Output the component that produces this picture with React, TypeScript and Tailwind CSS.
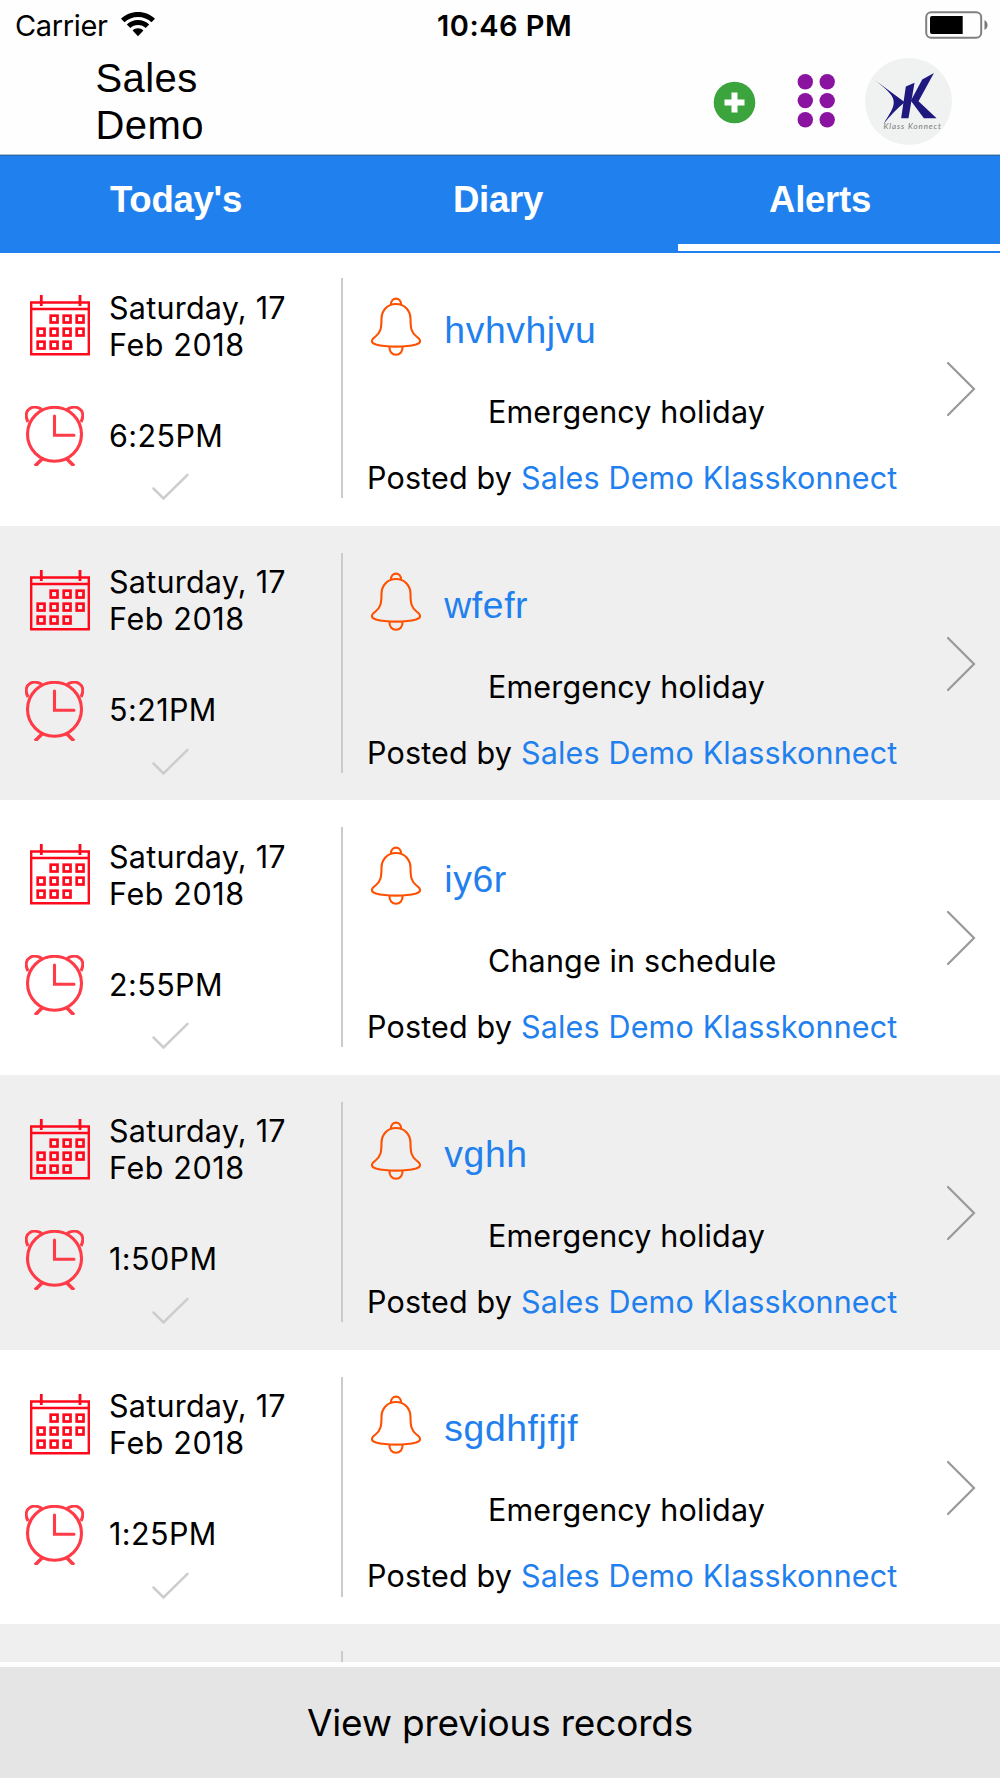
const alerts = [
  { title: "hvhvhjvu", time: "6:25PM", category: "Emergency holiday" },
  { title: "wfefr", time: "5:21PM", category: "Emergency holiday" },
  { title: "iy6r", time: "2:55PM", category: "Change in schedule" },
  { title: "vghh", time: "1:50PM", category: "Emergency holiday" },
  { title: "sgdhfjfjf", time: "1:25PM", category: "Emergency holiday" },
];

const calendarCells = [
  [1, 0], [2, 0], [3, 0],
  [0, 1], [1, 1], [2, 1], [3, 1],
  [0, 2], [1, 2], [2, 2],
];

const CalendarIcon = () => (
  <svg className="mt-[6.5px] h-[61px] w-[60px] shrink-0" viewBox="0 0 60 61" fill="none" stroke="#ff0a1c" strokeWidth="2.4" aria-hidden="true">
    <path d="M1.2 7.5H58.8V59.3H1.2ZM1 14H59" />
    <path d="M11.3 0V11M50 0V11" strokeWidth="2.8" />
    {calendarCells.map(([col, row]) => (
      <rect key={`${col}-${row}`} x={7.7 + col * 13} y={20.7 + row * 13} width="6.8" height="6.8" strokeWidth="2.7" />
    ))}
  </svg>
);

const ClockIcon = () => (
  <svg className="h-[60px] w-[59px] shrink-0" viewBox="0 0 59 60" fill="none" stroke="#ff3b47" strokeWidth="3.1" aria-hidden="true">
    <circle cx="29.5" cy="28.3" r="27" />
    <path d="M29.5 10V29.3H49" strokeLinecap="round" />
    <path d="M3 16C0 10 1 5 5 2.5C8 0.5 13 1 17 3.5M56 16C59 10 58 5 54 2.5C51 0.5 46 1 42 3.5" />
    <path d="M18 52L10 60M41 52L49 60" strokeWidth="3.6" />
  </svg>
);

const BellIcon = () => (
  <svg className="h-[60px] w-[52px] shrink-0" viewBox="0 0 52 60" fill="none" stroke="#ff5000" strokeWidth="2.1" aria-hidden="true">
    <path d="M21 7.5C20.5 -0.3 31.5 -0.3 31 7.5" />
    <path d="M26 7C35 7 40.5 14 40.5 22C40.5 31 41.5 36 46.5 39.5C52 43.5 50.5 46 46 47.5C36 50.3 16 50.3 6 47.5C1.5 46 0 43.5 5.5 39.5C10.5 36 11.5 31 11.5 22C11.5 14 17 7 26 7Z" />
    <path d="M19.5 49.5C18.5 60.5 33.5 60.5 32.5 49.5" />
  </svg>
);

const StatusBar = () => (
  <div className="flex h-[52px] items-start">
    <div className="flex w-[437px] pl-[15px]">
      <span className="mt-[7.5px] w-[93px] text-[29px] leading-[36px] tracking-[-0.35px]">Carrier</span>
      <svg className="mt-[12px] ml-[13px] h-[25px] w-[34px]" viewBox="0 0 34 25" aria-hidden="true">
        <path d="M17 0C10.4 0 4.4 2.6 0 6.8L3.5 10.3C7 6.9 11.8 4.9 17 4.9S27 6.9 30.5 10.3L34 6.8C29.6 2.6 23.6 0 17 0Z" />
        <path d="M17 8.1C12.7 8.1 8.7 9.8 5.8 12.6L9.3 16.1C11.3 14.2 14 13 17 13S22.7 14.2 24.7 16.1L28.2 12.6C25.3 9.8 21.3 8.1 17 8.1Z" />
        <path d="M17 16.3C15 16.3 13 17.1 11.6 18.5L17 24.3L22.4 18.5C21 17.1 19 16.3 17 16.3Z" />
      </svg>
    </div>
    <span className="mt-[7.5px] text-[29px] font-semibold leading-[36px] tracking-[0.5px] whitespace-nowrap">10:46 PM</span>
    <svg className="mt-[10.5px] mr-[11px] ml-auto h-[28px] w-[64px]" viewBox="0 0 64 28" aria-hidden="true">
      <rect x="1.2" y="1.2" width="55" height="25.6" rx="5" fill="none" stroke="#808080" strokeWidth="2" />
      <path d="M7 5H37.7V23H7Q5 23 5 21V7Q5 5 7 5Z" />
      <path d="M59.5 9C63.5 11 63.5 17 59.5 19Z" fill="#777" />
    </svg>
  </div>
);

const Header = () => (
  <div className="flex h-[103px] border-b border-[#aebfd2]">
    <h1 className="mt-[3px] ml-[95.5px] w-[150px] font-['Liberation_Sans',sans-serif] text-[40px] leading-[46.6px] tracking-[0.4px]">
      Sales Demo
    </h1>
    <div className="mt-[6px] mr-[48px] ml-auto flex h-[87px] items-center">
      <svg className="h-[44px] w-[44px]" viewBox="0 0 44 44" aria-hidden="true">
        <circle cx="22.5" cy="22.5" r="20.8" fill="#3ca43c" />
        <path d="M22.5 12.5V32.5M12.5 22.5H32.5" stroke="#fff" strokeWidth="6" />
      </svg>
      <svg className="ml-[40px] h-[56px] w-[40px]" viewBox="0 0 40 56" fill="#8a14a0" aria-hidden="true">
        {[7.7, 26.6, 45.8].map((y) => (
          <g key={y}>
            <circle cx="9.3" cy={y} r="7.7" />
            <circle cx="31.2" cy={y} r="7.7" />
          </g>
        ))}
      </svg>
      <svg className="ml-[29px] h-[87px] w-[87px]" viewBox="14 24 260 260" aria-hidden="true">
        <circle cx="144" cy="154" r="130" fill="#f0f2f2" />
        <g fill="#1f187f">
          <path d="M43 90L133 156Q98 184 69 222C88 190 104 170 99 149C95 132 72 112 43 90Z" />
          <path d="M136 109L162 98L144 204H122Z" />
          <path d="M220 69L185 88L151 152L190 204H228L174 153Z" />
        </g>
        <text x="69" y="237" fill="#777" fontFamily="Lato, sans-serif" fontStyle="italic" fontWeight="400" fontSize="24" textLength="172">
          Klass Konnect
        </text>
      </svg>
    </div>
  </div>
);

const Tabs = () => (
  <nav className="relative z-10 grid h-[97.6px] grid-cols-[322px_322px_322px] border-t border-[#2468b0] bg-[#1f80ee] pl-[15px] text-center font-['Liberation_Sans',sans-serif] text-[36.6px] font-bold leading-[44px] tracking-[-0.3px] text-white">
    <span className="pt-[22px]">Today's</span>
    <span className="pt-[22px]">Diary</span>
    <span className="pt-[22px]">Alerts</span>
    <div className="absolute right-0 bottom-[1.6px] h-[7px] w-[322px] bg-white" />
  </nav>
);

const AlertRow = ({ alert }: { alert: (typeof alerts)[number] }) => (
  <li className="flex h-[274.6px] shrink-0 odd:bg-white even:bg-[#efefef]">
    <div className="w-[340.5px] pt-[37.5px]">
      <div className="flex h-[74px] pl-[29.5px]">
        <CalendarIcon />
        <p className="ml-[19.5px] w-[200px] text-[30.5px] leading-[37px]">
          <span className="tracking-[0.25px]">Saturday, 17</span>
          <br />
          <span className="tracking-[0.6px]">Feb 2018</span>
        </p>
      </div>
      <div className="mt-[43.5px] flex h-[60px] pl-[25px]">
        <ClockIcon />
        <span className="mt-[10.5px] ml-[25px] text-[30.5px] leading-[37px] tracking-[0.4px]">{alert.time}</span>
      </div>
      <svg className="mt-[6px] ml-[151px] h-[30px] w-[39px]" viewBox="0 0 39 30" fill="none" stroke="#cdcdcd" strokeWidth="2.5" strokeLinecap="round" aria-hidden="true">
        <path d="M2.5 16.5L12.5 26.5L36.5 2.8" />
      </svg>
    </div>
    <div className="mt-[27px] h-[220px] w-[2.5px] bg-[#cbcbcb]" />
    <div className="w-[600px] pt-[45.8px]">
      <div className="flex h-[60px] pl-[27px]">
        <BellIcon />
        <span className="mt-[11px] ml-[22.3px] font-['Liberation_Sans',sans-serif] text-[37.3px] leading-[44px] tracking-[0.6px] text-[#1f80ee]">
          {alert.title}
        </span>
      </div>
      <p className="mt-[36px] ml-[145px] text-[30.5px] leading-[37px] tracking-[0.15px]">{alert.category}</p>
      <p className="mt-[29px] ml-[24px] text-[30.5px] leading-[37px] tracking-[0.17px] whitespace-nowrap">
        Posted by <span className="text-[#1f80ee]">Sales Demo Klasskonnect</span>
      </p>
    </div>
    <svg className="mt-[110px] ml-[3px] h-[56px] w-[30px]" viewBox="0 0 30 56" fill="none" stroke="#999" strokeWidth="2.2" strokeLinecap="round" aria-hidden="true">
      <path d="M2 2L28 28L2 54" />
    </svg>
  </li>
);

const App = () => (
  <div className="flex h-[1778px] w-[1000px] flex-col overflow-hidden bg-[#fefefe] font-['Inter',sans-serif] text-black">
    <StatusBar />
    <Header />
    <Tabs />
    <ul className="-mt-[1.4px] flex h-[1410.8px] flex-col overflow-hidden">
      {alerts.map((alert) => (
        <AlertRow key={alert.time} alert={alert} />
      ))}
      <li className="flex h-[40px] bg-[#efefef] pl-[340.5px]">
        <div className="mt-[27px] w-[2.5px] bg-[#cbcbcb]" />
      </li>
    </ul>
    <button className="mt-[5px] flex-1 bg-[#e5e5e5] text-[37px] leading-[46px] tracking-[-0.2px]">View previous records</button>
  </div>
);

export default App;
